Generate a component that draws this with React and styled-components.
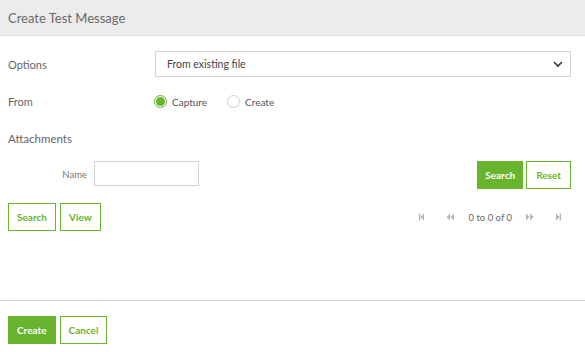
import React from "react"
import styled, { createGlobalStyle } from "styled-components"

const GlobalStyle = createGlobalStyle`
  html, body { margin: 0; padding: 0; background: #fff; }
  body { font-family: Lato, "Liberation Sans", sans-serif; color: #666; }
  * { box-sizing: border-box; }
`

const green = "#68b42e"

const Panel = styled.div`
  display: flex;
  flex-direction: column;
  width: 585px;
  height: 352px;
`

const Header = styled.div`
  height: 36px;
  padding: 0 8px;
  display: flex;
  align-items: center;
  background: #ececec;
  border-bottom: 1px solid #dcdcdc;
  font-size: 13px;
  color: #6a6a6a;
`

const Content = styled.div`
  flex: 1;
  padding: 15px 14px 0 8px;
`

const FieldRow = styled.div`
  display: flex;
  align-items: center;
  margin-top: ${p => p.$top || 0}px;
`

const Label = styled.div`
  width: ${p => p.$w || 147}px;
  font-size: 11px;
  color: #666;
`

const Select = styled.div`
  flex: 1;
  height: 26px;
  border: 1px solid #d2d2d2;
  display: flex;
  align-items: center;
  justify-content: space-between;
  padding: 0 6px 0 11px;
  font-size: 10.5px;
  color: #444;
`

const RadioGroup = styled.div`
  display: flex;
  align-items: center;
  gap: 5px;
  margin-right: 20px;
  font-size: 10px;
  color: #555;
`

const RadioDot = styled.span`
  width: 13px;
  height: 13px;
  border-radius: 50%;
  border: 1px solid ${p => (p.$checked ? green : "#cfcfcf")};
  display: inline-flex;
  align-items: center;
  justify-content: center;
  &::after {
    content: "";
    width: 9px;
    height: 9px;
    border-radius: 50%;
    background: ${p => (p.$checked ? green : "transparent")};
  }
`

const SectionTitle = styled.div`
  margin-top: ${p => p.$top}px;
  font-size: 11.5px;
  color: #666;
  line-height: 14px;
`

const FilterRow = styled.div`
  display: flex;
  align-items: center;
  margin-top: 15px;
`

const SmallLabel = styled.div`
  width: 79px;
  text-align: right;
  font-size: 9.5px;
  color: #777;
  margin-right: 7px;
  padding-bottom: 2px;
`

const Input = styled.div`
  width: 105px;
  height: 25px;
  border: 1px solid #d2d2d2;
  align-self: flex-start;
`

const Spacer = styled.div`
  flex: 1;
`

const Button = styled.div`
  height: 28px;
  padding: 0 ${p => p.$pad || 8}px;
  display: inline-flex;
  align-items: center;
  justify-content: center;
  font-size: 10px;
  font-weight: bold;
  border: 1px solid ${green};
  background: ${p => (p.$primary ? green : "#fff")};
  color: ${p => (p.$primary ? "#fff" : green)};
  margin-left: ${p => p.$gap || 0}px;
`

const Toolbar = styled.div`
  display: flex;
  align-items: center;
  margin-top: 14px;
`

const Pager = styled.div`
  display: flex;
  align-items: center;
  font-size: 9.5px;
  color: #666;
  margin-right: 10px;
`

const PagerIcon = styled.svg`
  width: ${p => p.$w || 8}px;
  height: 8px;
  fill: #b5b5b5;
`

const Footer = styled.div`
  border-top: 1px solid #d0d0d0;
  padding: 15px 8px 8px;
  display: flex;
`

const Gap = styled.span`
  display: inline-block;
  width: ${p => p.$w}px;
`

const Chevron = () => (
  <svg width="12" height="12" viewBox="0 0 12 12" fill="none" stroke="#333" strokeWidth="1.6">
    <path d="M2 4l4 4 4-4" />
  </svg>
)

const FirstIcon = () => (
  <PagerIcon viewBox="0 0 5 8" $w={5}>
    <rect x="0" y="0.5" width="1.3" height="7" />
    <path d="M5 0.5v7L1.3 4z" />
  </PagerIcon>
)

const PrevIcon = () => (
  <PagerIcon viewBox="0 0 8 8">
    <path d="M4 0.5v7L0.5 4zM8 0.5v7L4.5 4z" />
  </PagerIcon>
)

const NextIcon = () => (
  <PagerIcon viewBox="0 0 8 8">
    <path d="M0 0.5v7L3.5 4zM4 0.5v7L7.5 4z" />
  </PagerIcon>
)

const LastIcon = () => (
  <PagerIcon viewBox="0 0 5 8" $w={5}>
    <path d="M0 0.5v7L3.7 4z" />
    <rect x="3.7" y="0.5" width="1.3" height="7" />
  </PagerIcon>
)

export default function App() {
  return (
    <Panel>
      <GlobalStyle />
      <Header>Create Test Message</Header>
      <Content>
        <FieldRow>
          <Label>Options</Label>
          <Select>
            <span>From existing file</span>
            <Chevron />
          </Select>
        </FieldRow>
        <FieldRow $top={18}>
          <Label $w={146}>From</Label>
          <RadioGroup>
            <RadioDot $checked />
            Capture
          </RadioGroup>
          <RadioGroup>
            <RadioDot />
            Create
          </RadioGroup>
        </FieldRow>
        <SectionTitle $top={24}>Attachments</SectionTitle>
        <FilterRow>
          <SmallLabel>Name</SmallLabel>
          <Input />
          <Spacer />
          <Button $primary $pad={7}>Search</Button>
          <Button $gap={3} $pad={9}>Reset</Button>
        </FilterRow>
        <Toolbar>
          <Button $pad={8}>Search</Button>
          <Button $gap={4} $pad={8}>View</Button>
          <Spacer />
          <Pager>
            <FirstIcon />
            <Gap $w={22} />
            <PrevIcon />
            <Gap $w={15} />
            <span>0 to 0 of 0</span>
            <Gap $w={14} />
            <NextIcon />
            <Gap $w={22} />
            <LastIcon />
          </Pager>
        </Toolbar>
      </Content>
      <Footer>
        <Button $primary $pad={8}>Create</Button>
        <Button $gap={4} $pad={8}>Cancel</Button>
      </Footer>
    </Panel>
  )
}
